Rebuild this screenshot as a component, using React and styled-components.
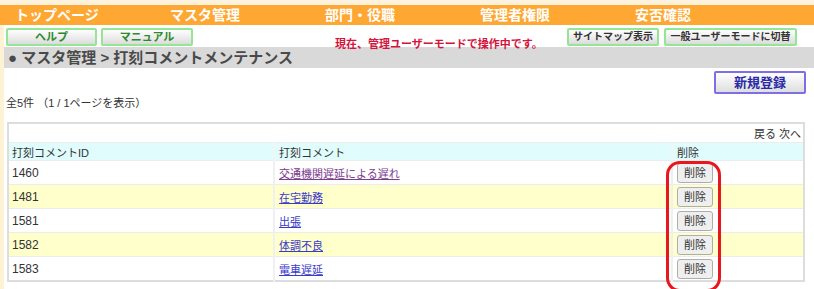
import React from "react";
import styled, { createGlobalStyle } from "styled-components";

const GlobalStyle = createGlobalStyle`
  body {
    margin: 0;
    background: #fff;
    font-family: "Liberation Sans", "Noto Sans CJK JP", sans-serif;
    color: #333;
  }
`;

const Page = styled.div`
  position: relative;
  width: 814px;
  height: 289px;
  overflow: hidden;
  border-top: 5px solid #fdf3dc;
  box-sizing: border-box;
`;

const NavBar = styled.div`
  display: grid;
  grid-template-columns: repeat(5, 155px);
  height: 20px;
  background: #ffa733;
`;

const NavItem = styled.div`
  padding-left: 15px;
  color: #fff;
  font-size: 14px;
  font-weight: bold;
  line-height: 20px;
  white-space: nowrap;
`;

const Body = styled.div`
  border-left: 4px solid #fdf2d4;
  min-height: 270px;
`;

const ToolRow = styled.div`
  display: flex;
  align-items: center;
  height: 22px;
  padding-left: 2px;
`;

const ToolButton = styled.div`
  box-sizing: border-box;
  width: ${(p) => p.$w}px;
  height: 18px;
  margin-left: ${(p) => p.$ml || 0}px;
  margin-top: 2px;
  border: 2px solid #94e594;
  border-radius: 2px;
  background: linear-gradient(#ffffff, #dcdcdc);
  color: ${(p) => (p.$dark ? "#333" : "#2b8a2b")};
  font-size: ${(p) => (p.$dark ? 10 : 11)}px;
  font-weight: bold;
  text-align: center;
  line-height: 14px;
  white-space: nowrap;
`;

const Notice = styled.div`
  margin-left: 142px;
  margin-top: 13px;
  width: 232px;
  color: #d5143c;
  font-size: 11px;
  font-weight: bold;
  white-space: nowrap;
`;

const Crumb = styled.div`
  height: 21px;
  background: #d9d9d9;
  color: #4a4a4a;
  font-size: 15px;
  font-weight: bold;
  line-height: 21px;
  padding-left: 4px;
  white-space: nowrap;
`;

const ActionRow = styled.div`
  display: flex;
  justify-content: flex-end;
  padding: 3px 8px 0 0;
`;

const NewButton = styled.div`
  box-sizing: border-box;
  width: 92px;
  height: 23px;
  border: 2px solid #7f6fe6;
  border-radius: 2px;
  background: linear-gradient(#ffffff, #dedede);
  color: #2a2aa8;
  font-size: 13px;
  font-weight: bold;
  text-align: center;
  line-height: 19px;
`;

const Count = styled.div`
  padding-left: 2px;
  margin-top: 2px;
  font-size: 11px;
  line-height: 14px;
  color: #333;
`;

const Table = styled.table`
  margin: 12px 0 0 3px;
  width: 798px;
  border-collapse: collapse;
  border: 2px solid #dddddd;
  font-size: 11px;
  color: #333;
`;

const PagerCell = styled.td`
  height: 18px;
  text-align: right;
  padding: 0 2px 0 0;
  border-bottom: 1px solid #ececec;
`;

const HeadCell = styled.td`
  height: 17px;
  padding: 0 0 0 ${(p) => p.$pl || 3}px;
  background: #e0fcfc;
  border-left: ${(p) => (p.$first ? "none" : "2px solid #eef6f6")};
  width: ${(p) => p.$w}px;
`;

const Row = styled.tr`
  background: ${(p) => (p.$alt ? "#ffffcc" : "#fff")};
`;

const Cell = styled.td`
  height: 23px;
  padding: 0 0 0 ${(p) => p.$pl || 3}px;
  border-top: 1px solid #ececec;
  border-left: ${(p) => (p.$first ? "none" : "2px solid #f0f0f0")};
  font-size: ${(p) => (p.$num ? 12 : 11)}px;
`;

const CommentLink = styled.a`
  color: ${(p) => (p.$visited ? "#7a3c8c" : "#3a3acc")};
  text-decoration: underline;
`;

const DeleteButton = styled.div`
  box-sizing: border-box;
  width: 36px;
  height: 20px;
  border: 1px solid #adadad;
  border-radius: 3px;
  background: #efefef;
  color: #333;
  font-size: 11px;
  text-align: center;
  line-height: 18px;
`;

const Annotation = styled.div`
  position: absolute;
  left: 666px;
  top: 156px;
  width: 55px;
  height: 131px;
  box-sizing: border-box;
  border: 3.5px solid #e8161f;
  border-radius: 14px;
  pointer-events: none;
`;

const navItems = ["トップページ", "マスタ管理", "部門・役職", "管理者権限", "安否確認"];

const rows = [
  { id: 1460, text: "交通機関遅延による遅れ", visited: true },
  { id: 1481, text: "在宅勤務" },
  { id: 1581, text: "出張" },
  { id: 1582, text: "体調不良" },
  { id: 1583, text: "電車遅延" },
];

export default function App() {
  return (
    <>
      <GlobalStyle />
      <Page>
        <NavBar>
          {navItems.map((n) => (
            <NavItem key={n}>{n}</NavItem>
          ))}
        </NavBar>
        <Body>
          <ToolRow>
            <ToolButton $w={91}>ヘルプ</ToolButton>
            <ToolButton $w={92} $ml={4}>マニュアル</ToolButton>
            <Notice>現在、管理ユーザーモードで操作中です。</Notice>
            <ToolButton $w={92} $dark>サイトマップ表示</ToolButton>
            <ToolButton $w={133} $ml={5} $dark>一般ユーザーモードに切替</ToolButton>
          </ToolRow>
          <Crumb>● マスタ管理 &gt; 打刻コメントメンテナンス</Crumb>
          <ActionRow>
            <NewButton>新規登録</NewButton>
          </ActionRow>
          <Count>全5件 （1 / 1ページを表示）</Count>
          <Table>
            <tbody>
              <tr>
                <PagerCell colSpan={3}>戻る 次へ</PagerCell>
              </tr>
              <tr>
                <HeadCell $first $w={261}>打刻コメントID</HeadCell>
                <HeadCell $w={392} $pl={4}>打刻コメント</HeadCell>
                <HeadCell $pl={4}>削除</HeadCell>
              </tr>
              {rows.map((r, i) => (
                <Row key={r.id} $alt={i % 2 === 1}>
                  <Cell $first $num>{r.id}</Cell>
                  <Cell $pl={4}>
                    <CommentLink href="#" $visited={r.visited}>
                      {r.text}
                    </CommentLink>
                  </Cell>
                  <Cell $pl={4}>
                    <DeleteButton>削除</DeleteButton>
                  </Cell>
                </Row>
              ))}
            </tbody>
          </Table>
        </Body>
        <Annotation />
      </Page>
    </>
  );
}
